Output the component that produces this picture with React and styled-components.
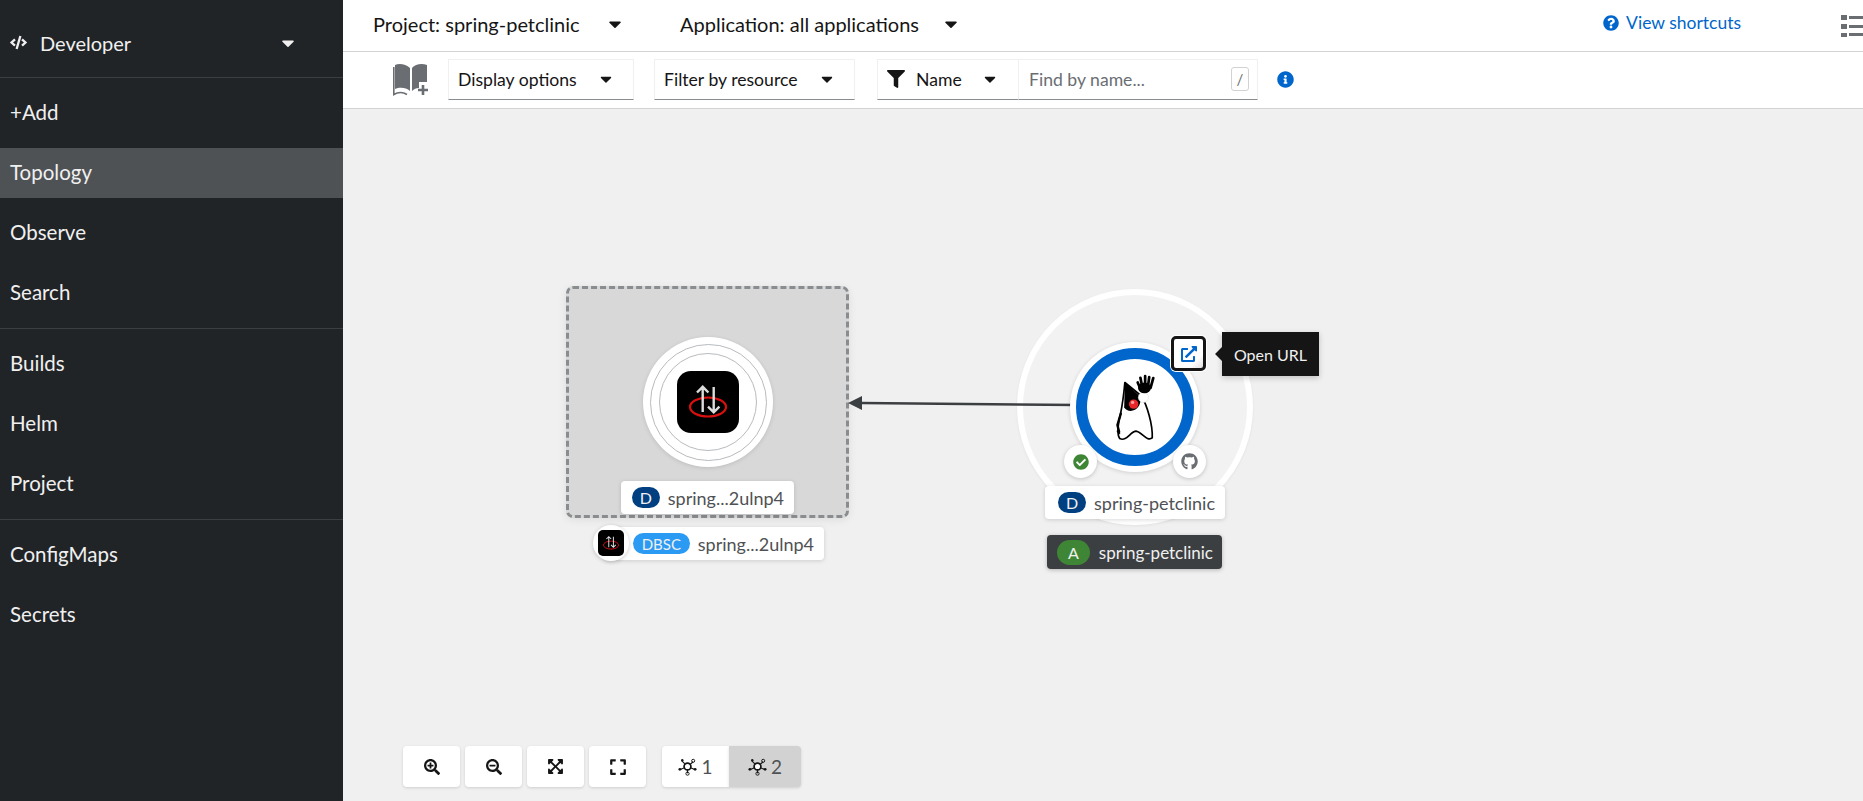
import React from "react";
import styled, { createGlobalStyle } from "styled-components";
import {
  FaCaretDown,
  FaCheckCircle,
  FaCode,
  FaExpand,
  FaExpandArrowsAlt,
  FaExternalLinkAlt,
  FaFilter,
  FaGithub,
  FaInfoCircle,
  FaQuestionCircle,
  FaSearchMinus,
  FaSearchPlus,
} from "react-icons/fa";

const navGroups = [
  ["+Add", "Topology", "Observe", "Search"],
  ["Builds", "Helm", "Project"],
  ["ConfigMaps", "Secrets"],
];

function ServiceBindingIcon({ size, radius }) {
  return (
    <BindingTile $size={size} $radius={radius}>
      <svg viewBox="0 0 62 62" width={size} height={size}>
        <ellipse cx="31" cy="36" rx="18" ry="9.5" fill="none" stroke="#d70f0f" strokeWidth="2.2" />
        <path d="M25.700 41V16M20 21.500l5.700-5.700 5.700 5.700M36.700 16v25M31 35.700l5.700 5.700 5.700-5.700" fill="none" stroke="#dcdcdc" strokeWidth="2.4" />
      </svg>
    </BindingTile>
  );
}

function DukeLogo() {
  return (
    <svg viewBox="340 275 130 210" width="44" height="71">
      <path d="M375 306L424 346C440 372 458 430 456 470C440 482 425 452 408 450C392 450 380 482 360 472C350 460 356 420 362 400C368 370 372 340 375 306Z" fill="#fff" stroke="#000" strokeWidth="5" strokeLinejoin="round" />
      <path d="M375 306L420 347C424 360 420 378 405 387C392 393 380 390 373 380Z" fill="#000" />
      <path d="M363 398L353 432L358 452" fill="none" stroke="#000" strokeWidth="7" strokeLinecap="round" />
      <path d="M352 448l8 10" fill="none" stroke="#000" strokeWidth="5" />
      <ellipse cx="430" cy="350" rx="15" ry="15" fill="#fff" stroke="#e2e2e2" strokeWidth="2" />
      <ellipse cx="433" cy="322" rx="19" ry="16" fill="#000" />
      <path d="M419 320l-6-14M425 312l-4-20M435 310v-23M444 313l3-23M451 322l8-29" stroke="#000" strokeWidth="8" strokeLinecap="round" />
      <circle cx="401" cy="370" r="14" fill="#e8262a" />
      <circle cx="398" cy="365" r="5" fill="#f7a0a0" />
    </svg>
  );
}

function TopologyGlyph() {
  return (
    <svg viewBox="0 0 20 20" width="19" height="19">
      <path d="M10 10L4 4M10 10l6-5M10 10l-7 3M10 10l7 3M10 10v7" stroke="#151515" strokeWidth="1.2" />
      <circle cx="10" cy="10" r="3.600" fill="#fff" stroke="#151515" strokeWidth="1.800" />
      <circle cx="4.500" cy="3.500" r="1.300" fill="#151515" />
      <circle cx="16" cy="4" r="1.600" fill="none" stroke="#151515" strokeWidth="1" />
      <circle cx="2" cy="13" r="1.500" fill="#151515" />
      <circle cx="18" cy="13" r="1.500" fill="#151515" />
      <circle cx="10" cy="17.500" r="1.700" fill="none" stroke="#151515" strokeWidth="1" />
    </svg>
  );
}

function App() {
  return (
    <Page>
      <GlobalStyle />
      <Sidebar>
        <Perspective>
          <FaCode size={17} />
          <PerspectiveName>Developer</PerspectiveName>
          <FaCaretDown size={20} />
        </Perspective>
        {navGroups.map((group) => (
          <NavGroup key={group[0]}>
            {group.map((item) => (
              <NavItem key={item} $active={item === "Topology"}>
                {item}
              </NavItem>
            ))}
          </NavGroup>
        ))}
      </Sidebar>

      <Main>
        <Header>
          <ContextPicker $width={252} $gap={55}>
            Project: spring-petclinic
            <FaCaretDown size={20} />
          </ContextPicker>
          <ContextPicker $width={281} $gap={0}>
            Application: all applications
            <FaCaretDown size={20} />
          </ContextPicker>
          <Shortcuts>
            <FaQuestionCircle size={16} />
            View shortcuts
          </Shortcuts>
          <ListToggle>
            <svg viewBox="0 0 22 22" width="22" height="22">
              <path d="M0 0h6v5H0zM0 9h6v5H0zM0 18h6v4H0zM8 1h14v3H8zM8 10h14v3H8zM8 18h14v3H8z" fill="#6a6e73" />
            </svg>
          </ListToggle>
        </Header>

        <Toolbar>
          <BookButton>
            <svg viewBox="0 0 36 33" width="36" height="33">
              <path d="M2 2C6 0 13 1 17 5V28C13 24 6 24 2 26Z" fill="#6a6e73" />
              <path d="M19 5C22 1 29 0 34 2V19H26V25C23 25 21 26 19 28Z" fill="#6a6e73" />
              <path d="M.8 4V31.500C5 29 10 29 14 31.500" fill="none" stroke="#6a6e73" strokeWidth="1.600" />
              <path d="M30 22v10M25 27h10" stroke="#6a6e73" strokeWidth="2.600" />
            </svg>
          </BookButton>
          <SelectBox $width={186}>
            Display options
            <FaCaretDown size={18} />
          </SelectBox>
          <SelectBox $width={201}>
            Filter by resource
            <FaCaretDown size={18} />
          </SelectBox>
          <FilterGroup>
            <NameSelect>
              <FaFilter size={18} />
              <NameLabel>Name</NameLabel>
              <FaCaretDown size={18} />
            </NameSelect>
            <FindBox>
              <FindPlaceholder>Find by name...</FindPlaceholder>
              <SlashKey>/</SlashKey>
            </FindBox>
          </FilterGroup>
          <InfoMark>
            <FaInfoCircle size={17} />
          </InfoMark>
        </Toolbar>

        <Canvas>
          <ServiceGroup />
          <BindingDisc>
            <OuterRing>
              <InnerRing>
                <ServiceBindingIcon size={62} radius={14} />
              </InnerRing>
            </OuterRing>
          </BindingDisc>

          <NodeLabel $x={278} $y={372} $w={173}>
            <Badge $bg="#004080">D</Badge>
            spring...2ulnp4
          </NodeLabel>
          <NodeLabel $x={261} $y={418} $w={220}>
            <LabelIcon>
              <ServiceBindingIcon size={26} radius={5} />
            </LabelIcon>
            <Badge $bg="#2b9af3" $wide>DBSC</Badge>
            spring...2ulnp4
          </NodeLabel>

          <AppHalo />
          <Edge viewBox="0 0 240 20" width="240" height="20">
            <path d="M16 8L232 10" stroke="#3c3f42" strokeWidth="2.500" />
            <path d="M3 8l14-7v14Z" fill="#3c3f42" />
          </Edge>
          <AppDisc>
            <AppRing>
              <DukeLogo />
            </AppRing>
          </AppDisc>
          <OpenUrl>
            <FaExternalLinkAlt size={16} color="#06c" />
          </OpenUrl>
          <StatusDecorator>
            <FaCheckCircle size={16} color="#3e8635" />
          </StatusDecorator>
          <GitDecorator>
            <FaGithub size={17} color="#6a6e73" />
          </GitDecorator>
          <Tooltip>Open URL</Tooltip>

          <NodeLabel $x={702} $y={377} $w={180}>
            <Badge $bg="#004080">D</Badge>
            spring-petclinic
          </NodeLabel>
          <AppLabel>
            <Badge $bg="#3e8635" $tall>A</Badge>
            spring-petclinic
          </AppLabel>

          <Controls>
            <CtrlButton><FaSearchPlus size={16} /></CtrlButton>
            <CtrlButton><FaSearchMinus size={16} /></CtrlButton>
            <CtrlButton><FaExpandArrowsAlt size={17} /></CtrlButton>
            <CtrlButton><FaExpand size={18} /></CtrlButton>
            <LevelGroup>
              <LevelButton><TopologyGlyph />1</LevelButton>
              <LevelButton $on><TopologyGlyph />2</LevelButton>
            </LevelGroup>
          </Controls>
        </Canvas>
      </Main>
    </Page>
  );
}

export default App;

const GlobalStyle = createGlobalStyle`
  html, body { margin: 0; padding: 0; height: 100%; overflow: hidden; }
  body { font-family: "Lato", "Liberation Sans", sans-serif; color: #151515; }
  #root { height: 100%; }
  * { box-sizing: border-box; }
`;

const Page = styled.div`
  display: flex;
  width: 1863px;
  height: 801px;
  overflow: hidden;
`;

const Sidebar = styled.aside`
  width: 343px;
  flex: none;
  background: #212427;
  color: #f0f0f0;
`;

const Perspective = styled.div`
  height: 78px;
  display: flex;
  align-items: center;
  padding: 8px 45px 0 10px;
  border-bottom: 1px solid #3c3f42;
  color: #f0f0f0;
`;

const PerspectiveName = styled.span`
  flex: 1;
  margin-left: 13px;
  font-size: 20px;
`;

const NavGroup = styled.div`
  display: flex;
  flex-direction: column;
  gap: 10px;
  padding: 10px 0;
  border-bottom: 1px solid #3c3f42;

  &:last-child {
    border-bottom: none;
  }
`;

const NavItem = styled.div`
  height: 50px;
  display: flex;
  align-items: center;
  padding: 0 0 2px 10px;
  font-size: 20.500px;
  background: ${(p) => (p.$active ? "#4f5255" : "transparent")};
`;

const Main = styled.main`
  flex: 1;
  min-width: 0;
  display: flex;
  flex-direction: column;
`;

const Header = styled.header`
  height: 52px;
  flex: none;
  display: flex;
  align-items: center;
  padding-left: 30px;
  padding-bottom: 4px;
  border-bottom: 1px solid #d2d2d2;
  background: #fff;
`;

const ContextPicker = styled.div`
  width: ${(p) => p.$width}px;
  margin-right: ${(p) => p.$gap}px;
  display: flex;
  align-items: center;
  justify-content: space-between;
  font-size: 20px;
`;

const Shortcuts = styled.a`
  margin-left: auto;
  margin-bottom: 2px;
  display: flex;
  align-items: center;
  gap: 7px;
  font-size: 17.500px;
  color: #06c;
`;

const ListToggle = styled.div`
  width: 22px;
  flex: none;
  margin-left: 100px;
  margin-top: 4px;
  display: flex;
`;

const Toolbar = styled.div`
  height: 57px;
  flex: none;
  display: flex;
  align-items: center;
  padding: 0 0 2px 50px;
  border-bottom: 1px solid #d2d2d2;
  background: #fff;
`;

const BookButton = styled.div`
  width: 55px;
  display: flex;
`;

const SelectBox = styled.div`
  width: ${(p) => p.$width}px;
  height: 41px;
  margin-right: 20px;
  padding: 0 18px 0 9px;
  display: flex;
  align-items: center;
  justify-content: space-between;
  font-size: 17.600px;
  border: 1px solid #f0f0f0;
  border-bottom-color: #8a8d90;
`;

const FilterGroup = styled.div`
  display: flex;
  height: 41px;
  margin-left: 2px;
`;

const NameSelect = styled.div`
  width: 142px;
  display: flex;
  align-items: center;
  padding: 0 19px 0 9px;
  border: 1px solid #f0f0f0;
  border-bottom-color: #8a8d90;
  font-size: 17.600px;
`;

const NameLabel = styled.span`
  flex: 1;
  margin-left: 11px;
`;

const FindBox = styled.div`
  width: 239px;
  display: flex;
  align-items: center;
  justify-content: space-between;
  padding: 0 8px 0 10px;
  border: 1px solid #f0f0f0;
  border-left: none;
  border-bottom-color: #8a8d90;
  font-size: 17.600px;
`;

const FindPlaceholder = styled.span`
  color: #6a6e73;
`;

const SlashKey = styled.span`
  width: 18px;
  height: 24px;
  display: flex;
  align-items: center;
  justify-content: center;
  font-size: 15px;
  color: #6a6e73;
  border: 1px solid #d2d2d2;
  border-radius: 3px;
`;

const InfoMark = styled.div`
  display: flex;
  margin-left: 19px;
  color: #06c;
`;

const Canvas = styled.section`
  position: relative;
  flex: 1;
  background: #f0f0f0;
  overflow: hidden;
`;

const ServiceGroup = styled.div`
  position: absolute;
  left: 223px;
  top: 177px;
  width: 283px;
  height: 232px;
  background: #d8d8d8;
  border: 3px dashed #8a8d90;
  border-radius: 7px;
  box-shadow: 0 2px 8px rgba(3, 3, 3, 0.08);
`;

const BindingDisc = styled.div`
  position: absolute;
  left: 300px;
  top: 228px;
  width: 130px;
  height: 130px;
  display: flex;
  align-items: center;
  justify-content: center;
  border-radius: 50%;
  background: #fff;
  box-shadow: 0 1px 4px rgba(3, 3, 3, 0.12);
`;

const OuterRing = styled.div`
  width: 117px;
  height: 117px;
  display: flex;
  align-items: center;
  justify-content: center;
  border: 1px solid #b8bbbe;
  border-radius: 50%;
`;

const InnerRing = styled.div`
  width: 98px;
  height: 98px;
  display: flex;
  align-items: center;
  justify-content: center;
  border: 1px solid #b8bbbe;
  border-radius: 50%;
`;

const BindingTile = styled.div`
  width: ${(p) => p.$size}px;
  height: ${(p) => p.$size}px;
  display: flex;
  background: #000;
  border-radius: ${(p) => p.$radius}px;
`;

const NodeLabel = styled.div`
  position: absolute;
  left: ${(p) => p.$x}px;
  top: ${(p) => p.$y}px;
  width: ${(p) => p.$w}px;
  height: 33px;
  display: flex;
  align-items: center;
  justify-content: flex-end;
  gap: 8px;
  padding: 0 10px;
  font-size: 18px;
  color: #4f5255;
  background: #fff;
  border-radius: 4px;
  box-shadow: 0 1px 4px rgba(3, 3, 3, 0.15);
`;

const Badge = styled.span`
  width: ${(p) => (p.$wide ? 57 : p.$tall ? 33 : 28)}px;
  height: ${(p) => (p.$tall ? 25 : 21)}px;
  flex: none;
  display: flex;
  align-items: center;
  justify-content: center;
  font-size: ${(p) => (p.$wide ? 15 : 16)}px;
  color: #f0f0f0;
  background: ${(p) => p.$bg};
  border-radius: 13px;
`;

const LabelIcon = styled.div`
  position: absolute;
  left: -11px;
  top: -2px;
  width: 36px;
  height: 36px;
  display: flex;
  align-items: center;
  justify-content: center;
  background: #fff;
  border-radius: 50%;
  box-shadow: 0 1px 4px rgba(3, 3, 3, 0.2);
`;

const Edge = styled.svg`
  position: absolute;
  left: 502px;
  top: 286px;
`;

const AppHalo = styled.div`
  position: absolute;
  left: 674px;
  top: 180px;
  width: 236px;
  height: 236px;
  background: #f2f2f2;
  border: 6px solid #fff;
  border-radius: 50%;
  box-shadow: 0 1px 3px rgba(3, 3, 3, 0.06);
`;

const AppDisc = styled.div`
  position: absolute;
  left: 727px;
  top: 233px;
  width: 130px;
  height: 130px;
  display: flex;
  align-items: center;
  justify-content: center;
  background: #fff;
  border-radius: 50%;
  box-shadow: 0 1px 4px rgba(3, 3, 3, 0.14);
`;

const AppRing = styled.div`
  width: 118px;
  height: 118px;
  display: flex;
  align-items: center;
  justify-content: center;
  border: 11px solid #06c;
  border-radius: 50%;
  background: #fff;
`;

const OpenUrl = styled.div`
  position: absolute;
  left: 828px;
  top: 227px;
  width: 35px;
  height: 35px;
  display: flex;
  align-items: center;
  justify-content: center;
  background: linear-gradient(135deg, #fff 75%, #ddd);
  border: 3px solid #151515;
  border-radius: 5px;
  box-shadow: 0 0 0 1px #fff;
`;

const RoundDecorator = styled.div`
  position: absolute;
  top: 336px;
  width: 33px;
  height: 33px;
  display: flex;
  align-items: center;
  justify-content: center;
  background: #fff;
  border-radius: 50%;
  box-shadow: 0 1px 4px rgba(3, 3, 3, 0.2);
`;

const StatusDecorator = styled(RoundDecorator)`
  left: 721px;
`;

const GitDecorator = styled(RoundDecorator)`
  left: 830px;
`;

const Tooltip = styled.div`
  position: absolute;
  left: 879px;
  top: 223px;
  width: 97px;
  height: 44px;
  display: flex;
  align-items: center;
  justify-content: center;
  font-size: 16px;
  color: #f0f0f0;
  background: #151515;
  box-shadow: 0 2px 6px rgba(3, 3, 3, 0.2);

  &::before {
    content: "";
    position: absolute;
    left: -7px;
    top: 15px;
    width: 14px;
    height: 14px;
    background: #151515;
    transform: rotate(45deg) scale(0.7);
  }
`;

const AppLabel = styled.div`
  position: absolute;
  left: 704px;
  top: 426px;
  width: 175px;
  height: 34px;
  display: flex;
  align-items: center;
  justify-content: space-between;
  padding: 0 9px 0 10px;
  font-size: 17px;
  color: #f0f0f0;
  background: #3c3f42;
  border-radius: 4px;
  box-shadow: 0 1px 4px rgba(3, 3, 3, 0.25);
`;

const Controls = styled.div`
  position: absolute;
  left: 60px;
  bottom: 14px;
  display: flex;
  gap: 5px;
`;

const CtrlButton = styled.button`
  width: 57px;
  height: 41px;
  display: flex;
  align-items: center;
  justify-content: center;
  padding: 0;
  color: #151515;
  background: #fff;
  border: none;
  border-radius: 4px;
  box-shadow: 0 1px 3px rgba(3, 3, 3, 0.14);
`;

const LevelGroup = styled.div`
  display: flex;
  margin-left: 11px;
`;

const LevelButton = styled.button`
  width: ${(p) => (p.$on ? 72 : 67)}px;
  height: 41px;
  display: flex;
  align-items: center;
  justify-content: center;
  gap: 4px;
  padding: 0;
  font-family: inherit;
  font-size: 19px;
  color: #4f5255;
  background: ${(p) => (p.$on ? "#d2d2d2" : "#fff")};
  border: none;
  border-radius: ${(p) => (p.$on ? "0 4px 4px 0" : "4px 0 0 4px")};
  box-shadow: 0 1px 3px rgba(3, 3, 3, 0.14);
`;
